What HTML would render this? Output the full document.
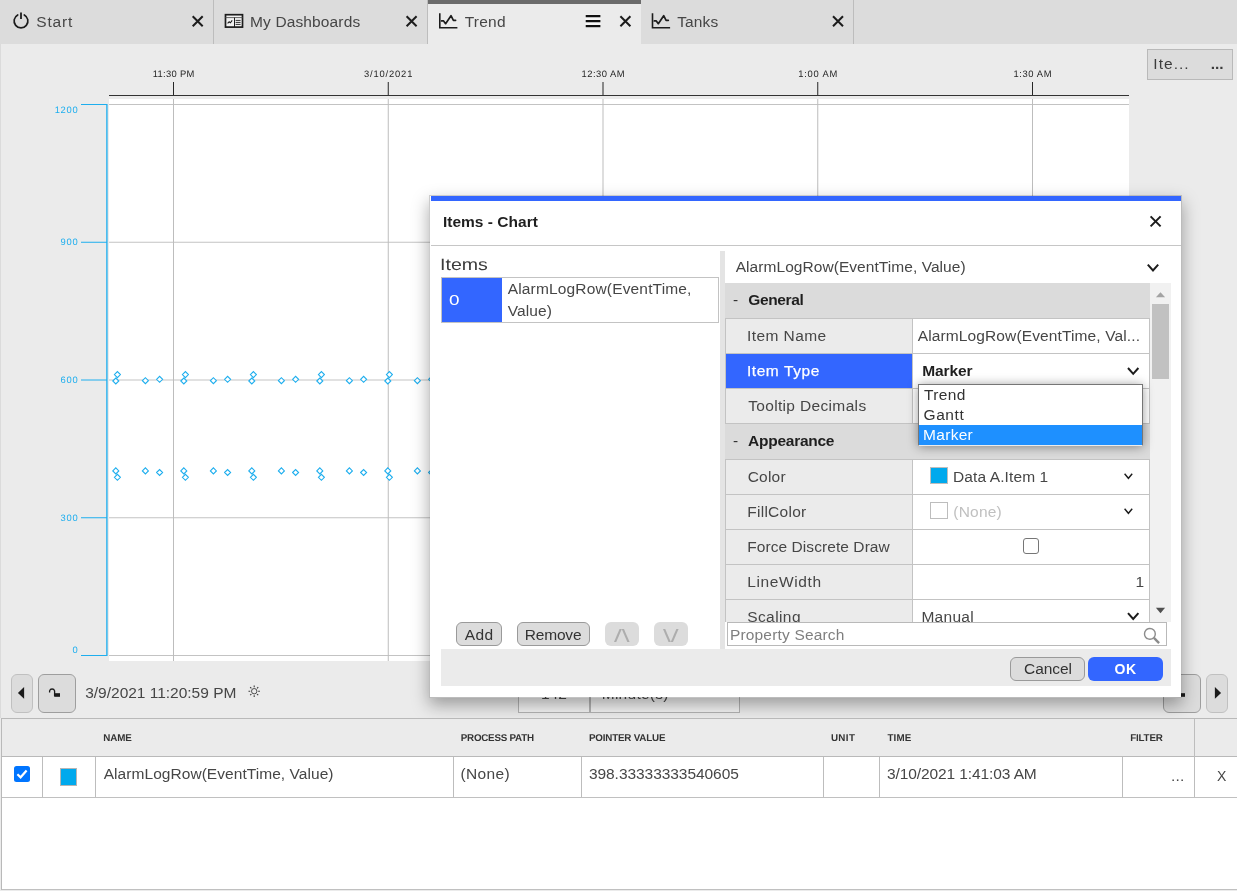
<!DOCTYPE html>
<html lang="en"><head><meta charset="utf-8"><title>Trend - Items - Chart</title>
<style>
html,body{margin:0;padding:0;}
body{width:1237px;height:891px;overflow:hidden;background:#ebebeb;position:relative;font-family:"Liberation Sans",sans-serif;}
.b{position:absolute;display:block;}
.t{position:absolute;white-space:pre;}
#tabs,#chart,#table,#dialog{position:absolute;left:0;top:0;width:1237px;will-change:transform;}
#tabs{height:44px;}
#chart{height:718px;overflow:hidden;}
#dialog{height:718px;overflow:hidden;}
#table{height:891px;}
</style></head>
<body>
<div id="chart"><div class="b" style="left:0px;top:44px;width:1px;height:847px;background:#dbdbdb;"></div>
<div class="b" style="left:1147px;top:49px;width:86px;height:31px;background:#dcdcdc;border:1px solid #b9b9b9;box-sizing:border-box;"></div>
<svg class="b" style="left:0;top:44px" width="1237" height="674" viewBox="0 44 1237 674"><rect x="109" y="99" width="1020" height="562" fill="#fff"/><path d="M109 104.5H1129" stroke="#c3c3c3" stroke-width="1"/><path d="M109 242.25H1129" stroke="#c3c3c3" stroke-width="1"/><path d="M109 380.0H1129" stroke="#c3c3c3" stroke-width="1"/><path d="M109 517.75H1129" stroke="#c3c3c3" stroke-width="1"/><path d="M109 655.5H1129" stroke="#c3c3c3" stroke-width="1"/><path d="M173.5 99V661" stroke="#bdbdbd" stroke-width="1"/><path d="M173.5 82V96" stroke="#262626" stroke-width="1"/><path d="M388.25 99V661" stroke="#bdbdbd" stroke-width="1"/><path d="M388.25 82V96" stroke="#262626" stroke-width="1"/><path d="M603.0 99V661" stroke="#bdbdbd" stroke-width="1"/><path d="M603.0 82V96" stroke="#262626" stroke-width="1"/><path d="M817.75 99V661" stroke="#bdbdbd" stroke-width="1"/><path d="M817.75 82V96" stroke="#262626" stroke-width="1"/><path d="M1032.5 99V661" stroke="#bdbdbd" stroke-width="1"/><path d="M1032.5 82V96" stroke="#262626" stroke-width="1"/><path d="M109 95.5H1129" stroke="#333" stroke-width="1.2"/><path d="M106.9 104V656" stroke="#1eaeee" stroke-width="1.35"/><path d="M81 104.5H107" stroke="#1eaeee" stroke-width="1"/><path d="M81 242.25H107" stroke="#1eaeee" stroke-width="1"/><path d="M81 380.0H107" stroke="#1eaeee" stroke-width="1"/><path d="M81 517.75H107" stroke="#1eaeee" stroke-width="1"/><path d="M81 655.5H107" stroke="#1eaeee" stroke-width="1"/><clipPath id="pc"><rect x="109" y="99" width="1020" height="562"/></clipPath><path clip-path="url(#pc)" d="M112.80 381.00L115.80 378.00L118.80 381.00L115.80 384.00ZM114.40 374.60L117.40 371.60L120.40 374.60L117.40 377.60ZM142.40 380.70L145.40 377.70L148.40 380.70L145.40 383.70ZM156.60 379.30L159.60 376.30L162.60 379.30L159.60 382.30ZM112.80 470.90L115.80 467.90L118.80 470.90L115.80 473.90ZM114.40 477.30L117.40 474.30L120.40 477.30L117.40 480.30ZM142.40 470.90L145.40 467.90L148.40 470.90L145.40 473.90ZM156.60 472.50L159.60 469.50L162.60 472.50L159.60 475.50ZM180.80 381.00L183.80 378.00L186.80 381.00L183.80 384.00ZM182.40 374.60L185.40 371.60L188.40 374.60L185.40 377.60ZM210.40 380.70L213.40 377.70L216.40 380.70L213.40 383.70ZM224.60 379.30L227.60 376.30L230.60 379.30L227.60 382.30ZM180.80 470.90L183.80 467.90L186.80 470.90L183.80 473.90ZM182.40 477.30L185.40 474.30L188.40 477.30L185.40 480.30ZM210.40 470.90L213.40 467.90L216.40 470.90L213.40 473.90ZM224.60 472.50L227.60 469.50L230.60 472.50L227.60 475.50ZM248.80 381.00L251.80 378.00L254.80 381.00L251.80 384.00ZM250.40 374.60L253.40 371.60L256.40 374.60L253.40 377.60ZM278.40 380.70L281.40 377.70L284.40 380.70L281.40 383.70ZM292.60 379.30L295.60 376.30L298.60 379.30L295.60 382.30ZM248.80 470.90L251.80 467.90L254.80 470.90L251.80 473.90ZM250.40 477.30L253.40 474.30L256.40 477.30L253.40 480.30ZM278.40 470.90L281.40 467.90L284.40 470.90L281.40 473.90ZM292.60 472.50L295.60 469.50L298.60 472.50L295.60 475.50ZM316.80 381.00L319.80 378.00L322.80 381.00L319.80 384.00ZM318.40 374.60L321.40 371.60L324.40 374.60L321.40 377.60ZM346.40 380.70L349.40 377.70L352.40 380.70L349.40 383.70ZM360.60 379.30L363.60 376.30L366.60 379.30L363.60 382.30ZM316.80 470.90L319.80 467.90L322.80 470.90L319.80 473.90ZM318.40 477.30L321.40 474.30L324.40 477.30L321.40 480.30ZM346.40 470.90L349.40 467.90L352.40 470.90L349.40 473.90ZM360.60 472.50L363.60 469.50L366.60 472.50L363.60 475.50ZM384.80 381.00L387.80 378.00L390.80 381.00L387.80 384.00ZM386.40 374.60L389.40 371.60L392.40 374.60L389.40 377.60ZM414.40 380.70L417.40 377.70L420.40 380.70L417.40 383.70ZM428.60 379.30L431.60 376.30L434.60 379.30L431.60 382.30ZM384.80 470.90L387.80 467.90L390.80 470.90L387.80 473.90ZM386.40 477.30L389.40 474.30L392.40 477.30L389.40 480.30ZM414.40 470.90L417.40 467.90L420.40 470.90L417.40 473.90ZM428.60 472.50L431.60 469.50L434.60 472.50L431.60 475.50ZM452.80 381.00L455.80 378.00L458.80 381.00L455.80 384.00ZM454.40 374.60L457.40 371.60L460.40 374.60L457.40 377.60ZM482.40 380.70L485.40 377.70L488.40 380.70L485.40 383.70ZM496.60 379.30L499.60 376.30L502.60 379.30L499.60 382.30ZM452.80 470.90L455.80 467.90L458.80 470.90L455.80 473.90ZM454.40 477.30L457.40 474.30L460.40 477.30L457.40 480.30ZM482.40 470.90L485.40 467.90L488.40 470.90L485.40 473.90ZM496.60 472.50L499.60 469.50L502.60 472.50L499.60 475.50ZM520.80 381.00L523.80 378.00L526.80 381.00L523.80 384.00ZM522.40 374.60L525.40 371.60L528.40 374.60L525.40 377.60ZM550.40 380.70L553.40 377.70L556.40 380.70L553.40 383.70ZM564.60 379.30L567.60 376.30L570.60 379.30L567.60 382.30ZM520.80 470.90L523.80 467.90L526.80 470.90L523.80 473.90ZM522.40 477.30L525.40 474.30L528.40 477.30L525.40 480.30ZM550.40 470.90L553.40 467.90L556.40 470.90L553.40 473.90ZM564.60 472.50L567.60 469.50L570.60 472.50L567.60 475.50ZM588.80 381.00L591.80 378.00L594.80 381.00L591.80 384.00ZM590.40 374.60L593.40 371.60L596.40 374.60L593.40 377.60ZM618.40 380.70L621.40 377.70L624.40 380.70L621.40 383.70ZM632.60 379.30L635.60 376.30L638.60 379.30L635.60 382.30ZM588.80 470.90L591.80 467.90L594.80 470.90L591.80 473.90ZM590.40 477.30L593.40 474.30L596.40 477.30L593.40 480.30ZM618.40 470.90L621.40 467.90L624.40 470.90L621.40 473.90ZM632.60 472.50L635.60 469.50L638.60 472.50L635.60 475.50ZM656.80 381.00L659.80 378.00L662.80 381.00L659.80 384.00ZM658.40 374.60L661.40 371.60L664.40 374.60L661.40 377.60ZM686.40 380.70L689.40 377.70L692.40 380.70L689.40 383.70ZM700.60 379.30L703.60 376.30L706.60 379.30L703.60 382.30ZM656.80 470.90L659.80 467.90L662.80 470.90L659.80 473.90ZM658.40 477.30L661.40 474.30L664.40 477.30L661.40 480.30ZM686.40 470.90L689.40 467.90L692.40 470.90L689.40 473.90ZM700.60 472.50L703.60 469.50L706.60 472.50L703.60 475.50ZM724.80 381.00L727.80 378.00L730.80 381.00L727.80 384.00ZM726.40 374.60L729.40 371.60L732.40 374.60L729.40 377.60ZM754.40 380.70L757.40 377.70L760.40 380.70L757.40 383.70ZM768.60 379.30L771.60 376.30L774.60 379.30L771.60 382.30ZM724.80 470.90L727.80 467.90L730.80 470.90L727.80 473.90ZM726.40 477.30L729.40 474.30L732.40 477.30L729.40 480.30ZM754.40 470.90L757.40 467.90L760.40 470.90L757.40 473.90ZM768.60 472.50L771.60 469.50L774.60 472.50L771.60 475.50ZM792.80 381.00L795.80 378.00L798.80 381.00L795.80 384.00ZM794.40 374.60L797.40 371.60L800.40 374.60L797.40 377.60ZM822.40 380.70L825.40 377.70L828.40 380.70L825.40 383.70ZM836.60 379.30L839.60 376.30L842.60 379.30L839.60 382.30ZM792.80 470.90L795.80 467.90L798.80 470.90L795.80 473.90ZM794.40 477.30L797.40 474.30L800.40 477.30L797.40 480.30ZM822.40 470.90L825.40 467.90L828.40 470.90L825.40 473.90ZM836.60 472.50L839.60 469.50L842.60 472.50L839.60 475.50ZM860.80 381.00L863.80 378.00L866.80 381.00L863.80 384.00ZM862.40 374.60L865.40 371.60L868.40 374.60L865.40 377.60ZM890.40 380.70L893.40 377.70L896.40 380.70L893.40 383.70ZM904.60 379.30L907.60 376.30L910.60 379.30L907.60 382.30ZM860.80 470.90L863.80 467.90L866.80 470.90L863.80 473.90ZM862.40 477.30L865.40 474.30L868.40 477.30L865.40 480.30ZM890.40 470.90L893.40 467.90L896.40 470.90L893.40 473.90ZM904.60 472.50L907.60 469.50L910.60 472.50L907.60 475.50ZM928.80 381.00L931.80 378.00L934.80 381.00L931.80 384.00ZM930.40 374.60L933.40 371.60L936.40 374.60L933.40 377.60ZM958.40 380.70L961.40 377.70L964.40 380.70L961.40 383.70ZM972.60 379.30L975.60 376.30L978.60 379.30L975.60 382.30ZM928.80 470.90L931.80 467.90L934.80 470.90L931.80 473.90ZM930.40 477.30L933.40 474.30L936.40 477.30L933.40 480.30ZM958.40 470.90L961.40 467.90L964.40 470.90L961.40 473.90ZM972.60 472.50L975.60 469.50L978.60 472.50L975.60 475.50ZM996.80 381.00L999.80 378.00L1002.80 381.00L999.80 384.00ZM998.40 374.60L1001.40 371.60L1004.40 374.60L1001.40 377.60ZM1026.40 380.70L1029.40 377.70L1032.40 380.70L1029.40 383.70ZM1040.60 379.30L1043.60 376.30L1046.60 379.30L1043.60 382.30ZM996.80 470.90L999.80 467.90L1002.80 470.90L999.80 473.90ZM998.40 477.30L1001.40 474.30L1004.40 477.30L1001.40 480.30ZM1026.40 470.90L1029.40 467.90L1032.40 470.90L1029.40 473.90ZM1040.60 472.50L1043.60 469.50L1046.60 472.50L1043.60 475.50ZM1064.80 381.00L1067.80 378.00L1070.80 381.00L1067.80 384.00ZM1066.40 374.60L1069.40 371.60L1072.40 374.60L1069.40 377.60ZM1094.40 380.70L1097.40 377.70L1100.40 380.70L1097.40 383.70ZM1108.60 379.30L1111.60 376.30L1114.60 379.30L1111.60 382.30ZM1064.80 470.90L1067.80 467.90L1070.80 470.90L1067.80 473.90ZM1066.40 477.30L1069.40 474.30L1072.40 477.30L1069.40 480.30ZM1094.40 470.90L1097.40 467.90L1100.40 470.90L1097.40 473.90ZM1108.60 472.50L1111.60 469.50L1114.60 472.50L1111.60 475.50Z" stroke="#1eaeee" stroke-width="1.1" fill="#fff"/></svg>
<div class="b" style="left:11px;top:674px;width:22px;height:39px;background:#dcdcdc;border:1px solid #c0c0c0;box-sizing:border-box;border-radius:6px;"></div>
<div class="b" style="left:38px;top:674px;width:38px;height:39px;background:#dcdcdc;border:1px solid #9e9e9e;box-sizing:border-box;border-radius:6px;"></div>
<svg class="b" style="left:11px;top:674px" width="22" height="39" viewBox="0 0 22 39"><path d="M6.9 18.9L13.1 13.1V24.7Z" fill="#1a1a1a"/></svg>
<svg class="b" style="left:38px;top:674px" width="38" height="39" viewBox="0 0 38 39"><path d="M11.6 18.6V16.9A2.6 2.6 0 0 1 16.6 16.9V22" stroke="#1a1a1a" stroke-width="1.3" fill="none"/><rect x="16.2" y="19.2" width="5.8" height="3.6" fill="#1a1a1a"/></svg>
<svg class="b" style="left:247px;top:684px" width="15" height="15" viewBox="247 684 15 15"><circle cx="254.2" cy="691.2" r="2.7" stroke="#3a3a3a" stroke-width="0.9" fill="none"/><path d="M258.2 691.2L259.9 691.2M257.03 694.03L258.23 695.23M254.2 695.2L254.2 696.9M251.37 694.03L250.17 695.23M250.2 691.2L248.5 691.2M251.37 688.37L250.17 687.17M254.2 687.2L254.2 685.5M257.03 688.37L258.23 687.17" stroke="#3a3a3a" stroke-width="1.1"/></svg>
<div class="b" style="left:518px;top:674px;width:72px;height:39px;background:#f4f4f4;border:1px solid #b4b4b4;box-sizing:border-box;"></div>
<div class="b" style="left:590px;top:674px;width:150px;height:39px;background:#f4f4f4;border:1px solid #b4b4b4;box-sizing:border-box;"></div>
<div class="b" style="left:1163px;top:674px;width:38px;height:39px;background:#dcdcdc;border:1px solid #9e9e9e;box-sizing:border-box;border-radius:6px;"></div>
<svg class="b" style="left:1163px;top:674px" width="38" height="39" viewBox="0 0 38 39"><path d="M11.6 18.6V16.9A2.6 2.6 0 0 1 16.6 16.9V22" stroke="#1a1a1a" stroke-width="1.3" fill="none"/><rect x="16.2" y="19.2" width="5.8" height="3.6" fill="#1a1a1a"/></svg>
<div class="b" style="left:1206px;top:674px;width:22px;height:39px;background:#dcdcdc;border:1px solid #c0c0c0;box-sizing:border-box;border-radius:6px;"></div>
<svg class="b" style="left:1206px;top:674px" width="22" height="39" viewBox="0 0 22 39"><path d="M15.1 18.9L8.9 13.1V24.7Z" fill="#1a1a1a"/></svg>
<span class="t" style="left:1153.35px;top:54px;font-size:15.5px;line-height:19px;color:#3c3c3c;letter-spacing:1.025px;">Ite...</span>
<span class="t" style="left:1210.64px;top:54px;font-size:15.5px;line-height:19px;color:#3c3c3c;font-weight:700;letter-spacing:0.025px;">...</span>
<span class="t" style="left:152.71px;top:68px;font-size:9.4px;line-height:11px;color:#262626;letter-spacing:0.322px;text-rendering:geometricPrecision;">11:30 PM</span>
<span class="t" style="left:364.04px;top:68px;font-size:9.4px;line-height:11px;color:#262626;letter-spacing:0.828px;text-rendering:geometricPrecision;">3/10/2021</span>
<span class="t" style="left:581.46px;top:68px;font-size:9.4px;line-height:11px;color:#262626;letter-spacing:0.502px;text-rendering:geometricPrecision;">12:30 AM</span>
<span class="t" style="left:798.26px;top:68px;font-size:9.4px;line-height:11px;color:#262626;letter-spacing:0.775px;text-rendering:geometricPrecision;">1:00 AM</span>
<span class="t" style="left:1013.51px;top:68px;font-size:9.4px;line-height:11px;color:#262626;letter-spacing:0.608px;text-rendering:geometricPrecision;">1:30 AM</span>
<span class="t" style="left:54.71px;top:104px;font-size:9.4px;line-height:11px;color:#1eaeee;letter-spacing:0.680px;text-rendering:geometricPrecision;">1200</span>
<span class="t" style="left:60.61px;top:236px;font-size:9.4px;line-height:11px;color:#1eaeee;letter-spacing:0.694px;text-rendering:geometricPrecision;">900</span>
<span class="t" style="left:60.57px;top:374px;font-size:9.4px;line-height:11px;color:#1eaeee;letter-spacing:0.710px;text-rendering:geometricPrecision;">600</span>
<span class="t" style="left:60.49px;top:512px;font-size:9.4px;line-height:11px;color:#1eaeee;letter-spacing:0.753px;text-rendering:geometricPrecision;">300</span>
<span class="t" style="left:72.50px;top:644px;font-size:9.4px;line-height:11px;color:#1eaeee;text-rendering:geometricPrecision;">0</span>
<span class="t" style="left:85.23px;top:683px;font-size:15.5px;line-height:19px;color:#464646;letter-spacing:-0.012px;">3/9/2021 11:20:59 PM</span>
<span class="t" style="left:540.90px;top:684px;font-size:15.5px;line-height:19px;color:#464646;">142</span>
<span class="t" style="left:601.72px;top:684px;font-size:15.5px;line-height:19px;color:#464646;letter-spacing:0.267px;">Minute(s)</span>
<span class="t" style="left:1001.23px;top:681px;font-size:15.5px;line-height:19px;color:#464646;letter-spacing:-0.032px;">3/10/2021 1:41:03 AM</span></div>
<div id="tabs"><div class="b" style="left:0px;top:0px;width:1237px;height:44px;background:#dcdcdc;"></div>
<div class="b" style="left:213px;top:0px;width:1px;height:44px;background:#bdbdbd;"></div>
<div class="b" style="left:427px;top:0px;width:1px;height:44px;background:#bdbdbd;"></div>
<div class="b" style="left:428px;top:0px;width:213px;height:44px;background:#ebebeb;"></div>
<div class="b" style="left:428px;top:0px;width:213px;height:4px;background:#6b6b6b;"></div>
<div class="b" style="left:853px;top:0px;width:1px;height:44px;background:#bdbdbd;"></div>
<svg class="b" style="left:11px;top:10px" width="20" height="22" viewBox="11 10 20 22"><path d="M17.7 14.9A6.9 6.9 0 1 0 24.3 14.9" stroke="#1c1c1c" stroke-width="1.7" fill="none" stroke-linecap="round"/><path d="M21 12.5V18.9" stroke="#1c1c1c" stroke-width="1.8"/></svg>
<svg class="b" style="left:224px;top:13px" width="20" height="16" viewBox="0 0 20 16"><rect x="1.5" y="1.7" width="17" height="12.4" fill="#f2f2f2" stroke="#1c1c1c" stroke-width="1.7"/><path d="M1.5 4.6H18.5" stroke="#555" stroke-width="0.9"/><path d="M10.5 4.6V14" stroke="#1c1c1c" stroke-width="1"/><path d="M3.6 10.4L5.2 8.8L6.4 9.8L8.2 7.4" stroke="#1c1c1c" stroke-width="1.1" fill="none"/><path d="M11.6 7.4H16.6M11.6 9.4H16.6M11.6 11.4H16.6" stroke="#333" stroke-width="1"/></svg>
<svg class="b" style="left:437px;top:11px" width="23" height="21" viewBox="437 11 23 21"><path d="M439.8 13.3L439.8 27.7L457.4 27.7" stroke="#1c1c1c" stroke-width="1.6" fill="none"/><path d="M441.6 20.9L443.6 20.9L445.6 23.7L451 15.7L453.4 20.3L455.6 20.3" stroke="#1c1c1c" stroke-width="1.7" fill="none" stroke-linejoin="round" stroke-linecap="round"/></svg>
<svg class="b" style="left:649px;top:11px" width="24" height="21" viewBox="649 11 24 21"><path d="M652.5 13.3L652.5 27.7L670.1 27.7" stroke="#1c1c1c" stroke-width="1.6" fill="none"/><path d="M654.3 20.9L656.3 20.9L658.3 23.7L663.7 15.7L666.1 20.3L668.3 20.3" stroke="#1c1c1c" stroke-width="1.7" fill="none" stroke-linejoin="round" stroke-linecap="round"/></svg>
<svg class="b" style="left:584px;top:13px" width="18" height="17" viewBox="0 0 18 17"><rect x="1.4" y="1.6" width="15.2" height="13.4" fill="#f6f6f6"/><path d="M1.7 3.1H16.4M1.7 8.2H16.4M1.7 13.2H16.4" stroke="#111" stroke-width="2.3"/></svg>
<svg class="b" style="left:190px;top:14px" width="15" height="15" viewBox="190 14 15 15"><path d="M192.7 16.3L202.7 26.3M202.7 16.3L192.7 26.3" stroke="#1c1c1c" stroke-width="2.0" fill="none"/></svg>
<svg class="b" style="left:404px;top:14px" width="15" height="15" viewBox="404 14 15 15"><path d="M406.6 16.3L416.6 26.3M416.6 16.3L406.6 26.3" stroke="#1c1c1c" stroke-width="2.0" fill="none"/></svg>
<svg class="b" style="left:618px;top:14px" width="15" height="15" viewBox="618 14 15 15"><path d="M620.4 16.3L630.4 26.3M630.4 16.3L620.4 26.3" stroke="#1c1c1c" stroke-width="2.0" fill="none"/></svg>
<svg class="b" style="left:831px;top:14px" width="14" height="15" viewBox="831 14 14 15"><path d="M833 16.3L843 26.3M843 16.3L833 26.3" stroke="#1c1c1c" stroke-width="2.0" fill="none"/></svg><span class="t" style="left:36.33px;top:12px;font-size:15.5px;line-height:19px;color:#464646;letter-spacing:0.820px;">Start</span>
<span class="t" style="left:250.02px;top:12px;font-size:15.5px;line-height:19px;color:#464646;letter-spacing:0.134px;">My Dashboards</span>
<span class="t" style="left:464.64px;top:12px;font-size:15.5px;line-height:19px;color:#464646;letter-spacing:0.260px;">Trend</span>
<span class="t" style="left:677.24px;top:12px;font-size:15.5px;line-height:19px;color:#464646;letter-spacing:0.123px;">Tanks</span></div>
<div id="table"><div class="b" style="left:1px;top:718px;width:1236px;height:172px;background:#fff;"></div>
<div class="b" style="left:1px;top:718px;width:1236px;height:39px;background:#ebebeb;"></div>
<div class="b" style="left:1px;top:718px;width:1236px;height:1px;background:#b9b9b9;"></div>
<div class="b" style="left:1px;top:756px;width:1236px;height:1px;background:#b9b9b9;"></div>
<div class="b" style="left:1px;top:797px;width:1236px;height:1px;background:#c0c0c0;"></div>
<div class="b" style="left:1px;top:889px;width:1236px;height:1px;background:#c0c0c0;"></div>
<div class="b" style="left:0px;top:890px;width:1237px;height:1px;background:#ebebeb;"></div>
<div class="b" style="left:1px;top:718px;width:1px;height:172px;background:#b9b9b9;"></div>
<div class="b" style="left:42px;top:757px;width:1px;height:40px;background:#bdbdbd;"></div>
<div class="b" style="left:95px;top:757px;width:1px;height:40px;background:#bdbdbd;"></div>
<div class="b" style="left:453px;top:757px;width:1px;height:40px;background:#bdbdbd;"></div>
<div class="b" style="left:581px;top:757px;width:1px;height:40px;background:#bdbdbd;"></div>
<div class="b" style="left:823px;top:757px;width:1px;height:40px;background:#bdbdbd;"></div>
<div class="b" style="left:879px;top:757px;width:1px;height:40px;background:#bdbdbd;"></div>
<div class="b" style="left:1122px;top:757px;width:1px;height:40px;background:#bdbdbd;"></div>
<div class="b" style="left:1194px;top:757px;width:1px;height:40px;background:#bdbdbd;"></div>
<div class="b" style="left:1194px;top:719px;width:1px;height:38px;background:#bdbdbd;"></div>
<svg class="b" style="left:14px;top:766px" width="16" height="16" viewBox="0 0 16 16"><rect x="0" y="0" width="16" height="16" rx="2.5" fill="#0075ff"/><path d="M3.4 8.2L6.6 11.3L12.6 4.6" stroke="#fff" stroke-width="2.2" fill="none"/></svg>
<div class="b" style="left:60px;top:768px;width:17px;height:18px;background:#00a9ed;border:1px solid #b5b5b5;box-sizing:border-box;"></div>
<span class="t" style="left:103.34px;top:733px;font-size:9.8px;line-height:12px;color:#333;font-weight:700;letter-spacing:-0.147px;text-rendering:geometricPrecision;">NAME</span>
<span class="t" style="left:460.74px;top:733px;font-size:9.8px;line-height:12px;color:#333;font-weight:700;letter-spacing:-0.229px;text-rendering:geometricPrecision;">PROCESS PATH</span>
<span class="t" style="left:589.04px;top:733px;font-size:9.8px;line-height:12px;color:#333;font-weight:700;letter-spacing:-0.195px;text-rendering:geometricPrecision;">POINTER VALUE</span>
<span class="t" style="left:830.90px;top:733px;font-size:9.8px;line-height:12px;color:#333;font-weight:700;letter-spacing:0.379px;text-rendering:geometricPrecision;">UNIT</span>
<span class="t" style="left:887.45px;top:733px;font-size:9.8px;line-height:12px;color:#333;font-weight:700;letter-spacing:0.153px;text-rendering:geometricPrecision;">TIME</span>
<span class="t" style="left:1130.14px;top:733px;font-size:9.8px;line-height:12px;color:#333;font-weight:700;letter-spacing:-0.165px;text-rendering:geometricPrecision;">FILTER</span>
<span class="t" style="left:103.73px;top:764px;font-size:15.5px;line-height:19px;color:#464646;letter-spacing:0.054px;">AlarmLogRow(EventTime, Value)</span>
<span class="t" style="left:460.59px;top:764px;font-size:15.5px;line-height:19px;color:#464646;letter-spacing:0.341px;">(None)</span>
<span class="t" style="left:588.93px;top:764px;font-size:15.5px;line-height:19px;color:#464646;letter-spacing:-0.053px;">398.33333333540605</span>
<span class="t" style="left:887.03px;top:764px;font-size:15.5px;line-height:19px;color:#464646;letter-spacing:-0.101px;">3/10/2021 1:41:03 AM</span>
<span class="t" style="left:1170.96px;top:766px;font-size:15.5px;line-height:19px;color:#464646;letter-spacing:0.227px;">...</span>
<span class="t" style="left:1216.93px;top:768px;font-size:14px;line-height:17px;color:#464646;">X</span></div>
<div id="dialog"><div class="b" style="left:429px;top:195px;width:753px;height:503px;border:1px solid rgba(0,0,0,.2);box-sizing:border-box;box-shadow:0 7px 16px rgba(0,0,0,.34);"></div>
<div class="b" style="left:430px;top:196px;width:751px;height:501px;background:#fff;"></div>
<div class="b" style="left:431px;top:196px;width:750px;height:5px;background:#3366ff;"></div>
<svg class="b" style="left:1148px;top:214px" width="15" height="15" viewBox="1148 214 15 15"><path d="M1150.6 216.4L1160.6 226.4M1160.6 216.4L1150.6 226.4" stroke="#1c1c1c" stroke-width="2.0" fill="none"/></svg>
<div class="b" style="left:431px;top:245px;width:750px;height:1px;background:#c6c6c6;"></div>
<div class="b" style="left:441px;top:277px;width:278px;height:46px;background:#fff;border:1px solid #c3c3c3;box-sizing:border-box;"></div>
<div class="b" style="left:442px;top:278px;width:60px;height:44px;background:#3366ff;"></div>
<div class="b" style="left:720px;top:251px;width:5px;height:398px;background:#e4e4e4;"></div>
<div class="b" style="left:456px;top:622px;width:46px;height:24px;background:#dcdcdc;border:1px solid #9a9a9a;box-sizing:border-box;border-radius:6px;"></div>
<div class="b" style="left:517px;top:622px;width:73px;height:24px;background:#dcdcdc;border:1px solid #9a9a9a;box-sizing:border-box;border-radius:6px;"></div>
<div class="b" style="left:605px;top:622px;width:34px;height:24px;background:#dcdcdc;border-radius:6px;"></div>
<div class="b" style="left:654px;top:622px;width:34px;height:24px;background:#dcdcdc;border-radius:6px;"></div>
<svg class="b" style="left:1145px;top:262px" width="16" height="11" viewBox="1145 262 16 11"><path d="M1147.8 264.7L1153 270.5L1158.2 264.7" stroke="#1c1c1c" stroke-width="2.0" fill="none"/></svg>
<span class="t" style="left:442.95px;top:212px;font-size:15.5px;line-height:19px;color:#1f1f1f;font-weight:700;letter-spacing:0.014px;">Items - Chart</span>
<span class="t" style="left:439.98px;top:255px;font-size:16.4px;line-height:20px;color:#3c3c3c;text-rendering:geometricPrecision;transform:scaleX(1.1942);transform-origin:0 0;">Items</span>
<span class="t" style="left:448.69px;top:292px;font-size:14px;line-height:17px;color:#fff;transform:scaleX(1.3509);transform-origin:0 0;">0</span>
<span class="t" style="left:507.73px;top:279px;font-size:15.5px;line-height:19px;color:#464646;letter-spacing:0.161px;">AlarmLogRow(EventTime,</span>
<span class="t" style="left:507.70px;top:301px;font-size:15.5px;line-height:19px;color:#464646;letter-spacing:0.131px;">Value)</span>
<span class="t" style="left:464.73px;top:625px;font-size:15.5px;line-height:19px;color:#333;letter-spacing:0.395px;">Add</span>
<span class="t" style="left:524.82px;top:625px;font-size:15.5px;line-height:19px;color:#333;letter-spacing:-0.197px;">Remove</span>
<span class="t" style="left:614.36px;top:625px;font-size:18px;line-height:22px;color:#adadad;transform:scaleX(1.56);transform-origin:0 0;">/\</span>
<span class="t" style="left:663.36px;top:625px;font-size:18px;line-height:22px;color:#adadad;transform:scaleX(1.56);transform-origin:0 0;">\/</span>
<span class="t" style="left:735.73px;top:257px;font-size:15.5px;line-height:19px;color:#464646;letter-spacing:0.057px;">AlarmLogRow(EventTime, Value)</span>
<div class="b" style="left:725px;top:283px;width:446px;height:339px;overflow:hidden"><div class="b" style="left:0px;top:0px;width:425px;height:339px;background:#fff;"></div>
<div class="b" style="left:0px;top:0px;width:425px;height:35px;background:#dbdbdb;"></div>
<div class="b" style="left:0px;top:141px;width:425px;height:35px;background:#dbdbdb;"></div>
<div class="b" style="left:1px;top:36px;width:186px;height:34px;background:#ebebeb;"></div>
<div class="b" style="left:0px;top:35px;width:425px;height:1px;background:#c3c3c3;"></div>
<div class="b" style="left:187px;top:35px;width:1px;height:36px;background:#c3c3c3;"></div>
<div class="b" style="left:1px;top:71px;width:186px;height:34px;background:#3366ff;"></div>
<div class="b" style="left:0px;top:70px;width:425px;height:1px;background:#c3c3c3;"></div>
<div class="b" style="left:187px;top:70px;width:1px;height:36px;background:#c3c3c3;"></div>
<div class="b" style="left:1px;top:106px;width:186px;height:34px;background:#ebebeb;"></div>
<div class="b" style="left:0px;top:105px;width:425px;height:1px;background:#c3c3c3;"></div>
<div class="b" style="left:187px;top:105px;width:1px;height:36px;background:#c3c3c3;"></div>
<div class="b" style="left:1px;top:177px;width:186px;height:34px;background:#ebebeb;"></div>
<div class="b" style="left:0px;top:176px;width:425px;height:1px;background:#c3c3c3;"></div>
<div class="b" style="left:187px;top:176px;width:1px;height:36px;background:#c3c3c3;"></div>
<div class="b" style="left:1px;top:212px;width:186px;height:34px;background:#ebebeb;"></div>
<div class="b" style="left:0px;top:211px;width:425px;height:1px;background:#c3c3c3;"></div>
<div class="b" style="left:187px;top:211px;width:1px;height:36px;background:#c3c3c3;"></div>
<div class="b" style="left:1px;top:247px;width:186px;height:34px;background:#ebebeb;"></div>
<div class="b" style="left:0px;top:246px;width:425px;height:1px;background:#c3c3c3;"></div>
<div class="b" style="left:187px;top:246px;width:1px;height:36px;background:#c3c3c3;"></div>
<div class="b" style="left:1px;top:282px;width:186px;height:34px;background:#ebebeb;"></div>
<div class="b" style="left:0px;top:281px;width:425px;height:1px;background:#c3c3c3;"></div>
<div class="b" style="left:187px;top:281px;width:1px;height:36px;background:#c3c3c3;"></div>
<div class="b" style="left:1px;top:317px;width:186px;height:34px;background:#ebebeb;"></div>
<div class="b" style="left:0px;top:316px;width:425px;height:1px;background:#c3c3c3;"></div>
<div class="b" style="left:187px;top:316px;width:1px;height:36px;background:#c3c3c3;"></div>
<div class="b" style="left:0px;top:140px;width:425px;height:1px;background:#c3c3c3;"></div>
<div class="b" style="left:0px;top:35px;width:1px;height:106px;background:#c3c3c3;"></div>
<div class="b" style="left:424px;top:35px;width:1px;height:106px;background:#c3c3c3;"></div>
<div class="b" style="left:0px;top:176px;width:1px;height:170px;background:#c3c3c3;"></div>
<div class="b" style="left:424px;top:176px;width:1px;height:170px;background:#c3c3c3;"></div>
<div class="b" style="left:425px;top:0px;width:21px;height:339px;background:#f1f1f1;"></div>
<div class="b" style="left:427px;top:21px;width:17px;height:75px;background:#c1c1c1;"></div>
<svg class="b" style="left:425px;top:0" width="21" height="21" viewBox="0 0 21 21"><path d="M5.9 14.3L10.5 9.3L15.1 14.3Z" fill="#a3a3a3"/></svg>
<svg class="b" style="left:425px;top:318px" width="21" height="21" viewBox="0 0 21 21"><path d="M5.9 6.8L10.5 12.2L15.1 6.8Z" fill="#505050"/></svg>
<div class="b" style="left:205px;top:184px;width:18px;height:17px;background:#00a9ed;border:1px solid #bdbdbd;box-sizing:border-box;"></div>
<div class="b" style="left:205px;top:219px;width:18px;height:17px;background:#fff;border:1px solid #bdbdbd;box-sizing:border-box;"></div>
<div class="b" style="left:298px;top:255px;width:16px;height:16px;background:#fff;border:1px solid #767676;box-sizing:border-box;border-radius:3px;"></div></div>
<svg class="b" style="left:1126px;top:366px" width="15" height="10" viewBox="1126 366 15 10"><path d="M1128 368L1133.2 373.8L1138.4 368" stroke="#1c1c1c" stroke-width="2.0" fill="none"/></svg>
<svg class="b" style="left:1122px;top:471px" width="13" height="10" viewBox="1122 471 13 10"><path d="M1124.6 473.7L1128.4 478.3L1132.2 473.7" stroke="#1c1c1c" stroke-width="1.4" fill="none"/></svg>
<svg class="b" style="left:1122px;top:506px" width="13" height="10" viewBox="1122 506 13 10"><path d="M1124.6 508.7L1128.4 513.3L1132.2 508.7" stroke="#1c1c1c" stroke-width="1.4" fill="none"/></svg>
<svg class="b" style="left:1126px;top:611px" width="15" height="10" viewBox="1126 611 15 10"><path d="M1128 613.1L1133.2 618.9L1138.4 613.1" stroke="#1c1c1c" stroke-width="2.0" fill="none"/></svg>
<span class="t" style="left:733.11px;top:290px;font-size:15.5px;line-height:19px;color:#333;">-</span>
<span class="t" style="left:748.28px;top:290px;font-size:15.5px;line-height:19px;color:#1f1f1f;font-weight:700;letter-spacing:-0.360px;">General</span>
<span class="t" style="left:733.11px;top:431px;font-size:15.5px;line-height:19px;color:#333;">-</span>
<span class="t" style="left:748.11px;top:431px;font-size:15.5px;line-height:19px;color:#1f1f1f;font-weight:700;letter-spacing:-0.267px;">Appearance</span>
<span class="t" style="left:747.05px;top:326px;font-size:15.5px;line-height:19px;color:#464646;letter-spacing:0.406px;">Item Name</span>
<span class="t" style="left:746.88px;top:361px;font-size:15.5px;line-height:19px;color:#fff;letter-spacing:0.579px;-webkit-text-stroke:0.25px #fff;">Item Type</span>
<span class="t" style="left:748.14px;top:396px;font-size:15.5px;line-height:19px;color:#464646;letter-spacing:0.344px;">Tooltip Decimals</span>
<span class="t" style="left:747.67px;top:467px;font-size:15.5px;line-height:19px;color:#464646;letter-spacing:0.237px;">Color</span>
<span class="t" style="left:747.22px;top:502px;font-size:15.5px;line-height:19px;color:#464646;letter-spacing:0.268px;">FillColor</span>
<span class="t" style="left:747.22px;top:537px;font-size:15.5px;line-height:19px;color:#464646;letter-spacing:0.071px;">Force Discrete Draw</span>
<span class="t" style="left:747.22px;top:572px;font-size:15.5px;line-height:19px;color:#464646;letter-spacing:0.618px;">LineWidth</span>
<span class="t" style="left:747.23px;top:607px;font-size:15.5px;line-height:19px;color:#464646;letter-spacing:0.408px;">Scaling</span>
<span class="t" style="left:917.73px;top:326px;font-size:15.5px;line-height:19px;color:#464646;letter-spacing:0.124px;">AlarmLogRow(EventTime, Val...</span>
<span class="t" style="left:922.26px;top:361px;font-size:15.5px;line-height:19px;color:#1f1f1f;font-weight:700;letter-spacing:-0.100px;">Marker</span>
<span class="t" style="left:953.02px;top:467px;font-size:15.5px;line-height:19px;color:#464646;letter-spacing:0.107px;">Data A.Item 1</span>
<span class="t" style="left:953.29px;top:502px;font-size:15.5px;line-height:19px;color:#c0c0c0;letter-spacing:0.221px;">(None)</span>
<span class="t" style="left:1135.56px;top:572px;font-size:15.5px;line-height:19px;color:#464646;">1</span>
<span class="t" style="left:921.42px;top:607px;font-size:15.5px;line-height:19px;color:#464646;letter-spacing:0.279px;">Manual</span>
<div class="b" style="left:725px;top:622px;width:456px;height:27px;background:#fff;"></div>
<div class="b" style="left:727px;top:622px;width:440px;height:24px;background:#fff;border:1px solid #b9b9b9;box-sizing:border-box;"></div>
<svg class="b" style="left:1141px;top:626px" width="22" height="20" viewBox="1141 626 22 20"><circle cx="1149.9" cy="633.9" r="5.4" stroke="#8c8c8c" stroke-width="1.4" fill="none"/><path d="M1153.9 637.9L1159.1 643.1" stroke="#8c8c8c" stroke-width="2.4"/></svg>
<div class="b" style="left:441px;top:649px;width:730px;height:37px;background:#ebebeb;"></div>
<div class="b" style="left:1010px;top:657px;width:75px;height:24px;background:#dcdcdc;border:1px solid #9a9a9a;box-sizing:border-box;border-radius:6px;"></div>
<div class="b" style="left:1088px;top:657px;width:75px;height:24px;background:#3366ff;border-radius:6px;"></div>
<div class="b" style="left:918px;top:384px;width:225px;height:62px;background:#fff;border:1px solid #767676;box-sizing:border-box;border-bottom-color:#ececec;box-shadow:0 1px 10px rgba(0,0,0,.4);"></div>
<div class="b" style="left:919px;top:425px;width:223px;height:20px;background:#1e90ff;"></div>
<span class="t" style="left:729.92px;top:625px;font-size:15.5px;line-height:19px;color:#7f7f7f;letter-spacing:0.177px;">Property Search</span>
<span class="t" style="left:1024.07px;top:659px;font-size:15.5px;line-height:19px;color:#333;letter-spacing:-0.055px;">Cancel</span>
<span class="t" style="left:1114.55px;top:661px;font-size:14px;line-height:17px;color:#fff;font-weight:700;letter-spacing:0.671px;">OK</span>
<span class="t" style="left:924.04px;top:385px;font-size:15.5px;line-height:19px;color:#333;letter-spacing:0.385px;">Trend</span>
<span class="t" style="left:923.56px;top:405px;font-size:15.5px;line-height:19px;color:#333;letter-spacing:0.562px;">Gantt</span>
<span class="t" style="left:923.12px;top:425px;font-size:15.5px;line-height:19px;color:#fff;letter-spacing:0.281px;">Marker</span></div>
</body></html>
